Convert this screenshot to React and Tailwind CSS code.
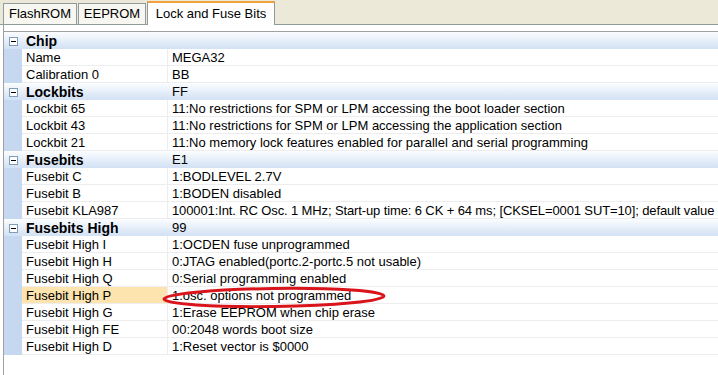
import React from 'react';

const rows = [
  { cat: 'Chip', value: '' },
  { name: 'Name', value: 'MEGA32' },
  { name: 'Calibration 0', value: 'BB' },
  { cat: 'Lockbits', value: 'FF' },
  { name: 'Lockbit 65', value: '11:No restrictions for SPM or LPM accessing the boot loader section' },
  { name: 'Lockbit 43', value: '11:No restrictions for SPM or LPM accessing the application section' },
  { name: 'Lockbit 21', value: '11:No memory lock features enabled for parallel and serial programming' },
  { cat: 'Fusebits', value: 'E1' },
  { name: 'Fusebit C', value: '1:BODLEVEL 2.7V' },
  { name: 'Fusebit B', value: '1:BODEN disabled' },
  { name: 'Fusebit KLA987', value: '100001:Int. RC Osc. 1 MHz; Start-up time: 6 CK + 64 ms; [CKSEL=0001 SUT=10]; default value', tight: true },
  { cat: 'Fusebits High', value: '99' },
  { name: 'Fusebit High I', value: '1:OCDEN fuse unprogrammed' },
  { name: 'Fusebit High H', value: '0:JTAG enabled(portc.2-portc.5 not usable)' },
  { name: 'Fusebit High Q', value: '0:Serial programming enabled' },
  { name: 'Fusebit High P', value: '1:osc. options not programmed', selected: true },
  { name: 'Fusebit High G', value: '1:Erase EEPROM when chip erase' },
  { name: 'Fusebit High FE', value: '00:2048 words boot size' },
  { name: 'Fusebit High D', value: '1:Reset vector is $0000' },
];

const MinusBox = () => (
  <svg width="9" height="9" viewBox="0 0 9 9" className="block">
    <rect x="0.5" y="0.5" width="8" height="8" fill="#ffffff" stroke="#7f9db9" />
    <line x1="2" y1="4.5" x2="7" y2="4.5" stroke="#000000" />
  </svg>
);

const Tab = ({ label, active, w }) =>
  active ? (
    <div className={`${w} h-[24px] flex items-center justify-center bg-white border-t-2 border-t-[#f0a33c] border-x border-x-[#919b9c] mb-[-1px] relative z-10`}>
      {label}
    </div>
  ) : (
    <div className={`${w} h-[21px] flex items-center justify-center bg-[#f7f6f0] border border-[#919b9c] border-b-0 mr-[1px]`}>
      {label}
    </div>
  );

export default function App() {
  return (
    <div
      className="w-[718px] h-[375px] bg-white overflow-hidden flex flex-col text-[13px] text-black"
      style={{ fontFamily: '"Liberation Sans", Arial, sans-serif' }}
    >
      {/* tab strip */}
      <div className="h-[25px] bg-[#ece9d8] border-b border-[#919b9c] flex items-end pl-[3px] shrink-0">
        <Tab label="FlashROM" w="w-[74px]" />
        <Tab label="EEPROM" w="w-[68px]" />
        <Tab label="Lock and Fuse Bits" w="w-[128px]" active />
      </div>

      <div className="flex-1 pl-[3px] flex">
        <div className="flex-1 border-l border-[#a0a0a0] pt-[6px]">
          <div className="relative border-t border-[#a0a0a0]">
            {rows.map((r, i) =>
              r.cat ? (
                <div
                  key={i}
                  className="h-[17px] flex items-center pt-[1px] bg-gradient-to-b from-[#fbfdff] to-[#d2e1f4]"
                >
                  <div className="w-[18px] shrink-0 flex justify-center items-center">
                    <MinusBox />
                  </div>
                  <div className="w-[146px] shrink-0 font-bold text-[14px] pl-[4px]">{r.cat}</div>
                  <div className="pl-[4px]">{r.value}</div>
                </div>
              ) : (
                <div key={i} className="h-[17px] flex">
                  <div className="w-[18px] shrink-0 bg-[#c6d8ef]" />
                  <div
                    className={
                      'w-[146px] shrink-0 pl-[4px] pt-[1px] flex items-center border-b border-r border-[#ededed] whitespace-nowrap ' +
                      (r.selected ? 'bg-[#fde3ad]' : '')
                    }
                  >
                    {r.name}
                  </div>
                  <div
                    className={
                      'flex-1 pl-[4px] pt-[1px] flex items-center border-b border-[#ededed] whitespace-nowrap ' +
                      (r.tight ? 'tracking-[-0.12px]' : '')
                    }
                  >
                    {r.value}
                  </div>
                </div>
              )
            )}

            {/* red marker drawn around the selected value */}
            <svg
              className="absolute left-[158px] top-[254px]"
              width="226"
              height="22"
              viewBox="0 0 226 22"
            >
              <ellipse
                cx="112"
                cy="11.5"
                rx="110"
                ry="9"
                fill="none"
                stroke="#d9141b"
                strokeWidth="3"
                transform="rotate(-0.8 112 11.5)"
              />
            </svg>
          </div>
        </div>
      </div>
    </div>
  );
}
